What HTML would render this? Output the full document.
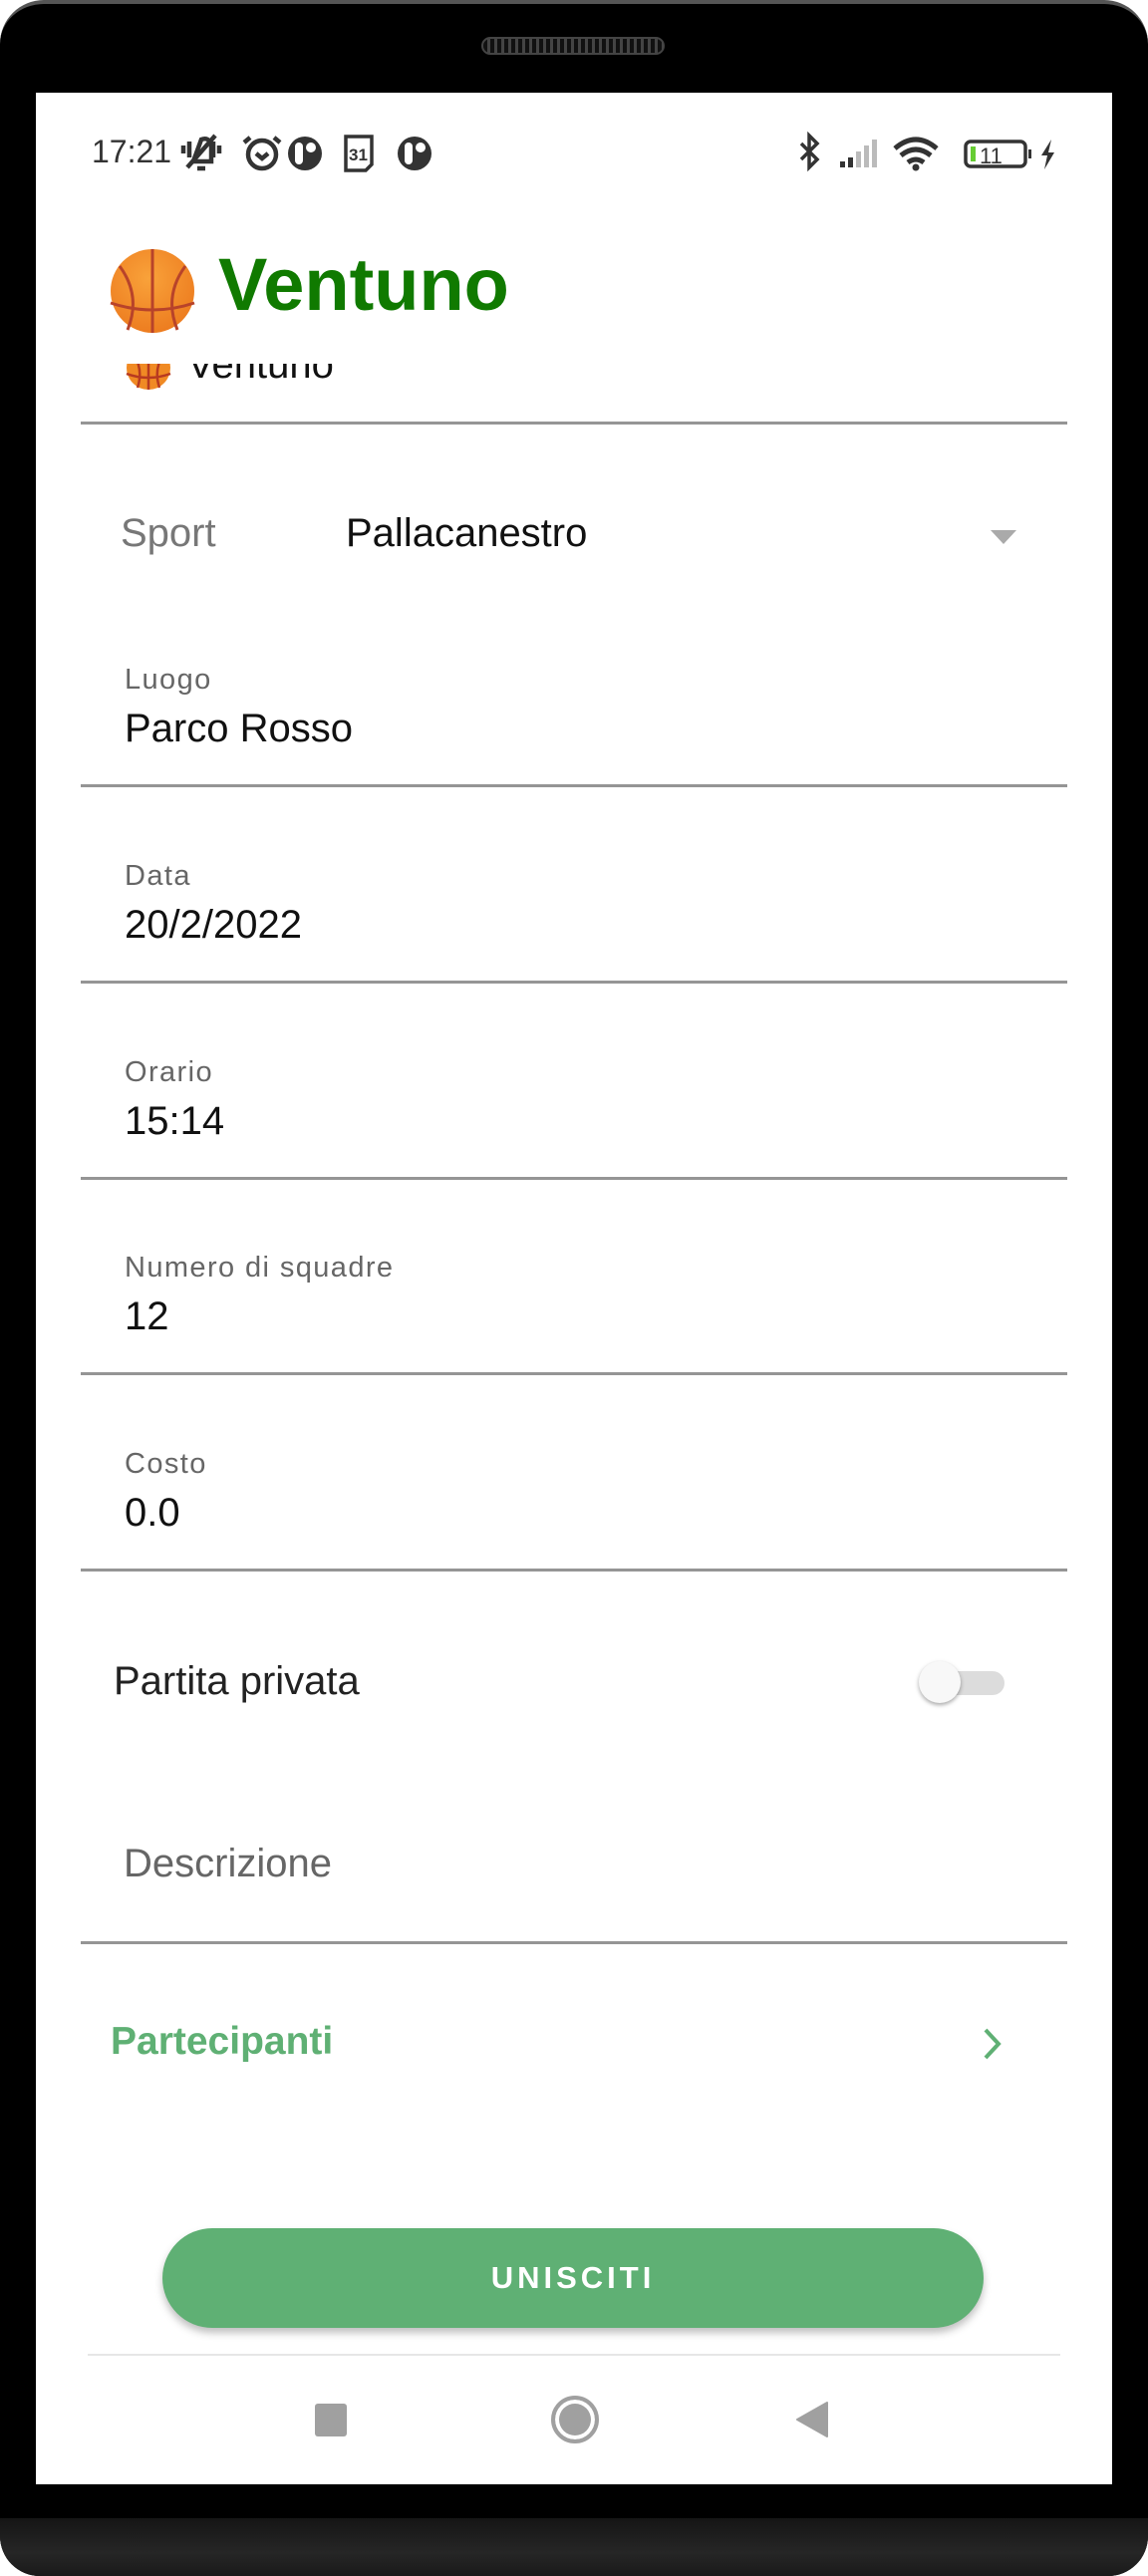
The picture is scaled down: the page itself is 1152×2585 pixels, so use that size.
<!DOCTYPE html>
<html><head><meta charset="utf-8"><style>
*{margin:0;padding:0;box-sizing:border-box}
body{width:1152px;height:2585px;background:#fff;position:relative;overflow:hidden;font-family:"Liberation Sans",sans-serif}
.a{position:absolute}
.frame{left:0;top:0;width:1152px;height:2585px;background:#000;border-radius:44px 44px 40px 40px;border-top:4px solid #555}
.bottom{left:0;top:2527px;width:1152px;height:58px;background:linear-gradient(#151515,#262626 60%,#1a1a1a);border-radius:0 0 40px 40px}
.screen{left:36px;top:93px;width:1080px;height:2400px;background:#fff;overflow:hidden}
.lbl{font-size:29px;color:#666;left:125px;letter-spacing:1.4px}
.val{font-size:40px;color:#111;left:125px}
.line{left:81px;width:990px;height:3px;background:#959595}
</style></head><body>
<div class="a frame"></div>
<div class="a bottom"></div>
<div class="a" style="left:483px;top:37px;width:184px;height:18px;border-radius:9px;background:#222;border:2px solid #444;background-image:repeating-linear-gradient(90deg,#111 0 4px,#444 4px 7px)"></div>
<div class="a screen"></div>

<!-- status bar -->
<div class="a" style="left:92px;top:134px;font-size:32px;color:#333">17:21</div>
<svg class="a" style="left:180px;top:132px" width="260" height="44" viewBox="0 0 260 44">
 <g fill="none" stroke="#333" stroke-width="4.5">
  <path d="M10 10v16M4 14v8M34 10v16M40 14v8"/><path d="M14 30 L22 8 Q30 5 32 14 L32 30Z"/><path d="M8 36 L36 4"/><path d="M18 37h8"/>
  <circle cx="83" cy="23" r="14"/><path d="M71 6l-6 5M95 6l6 5M77 22l6 5 6-5"/>
 </g>
 <circle cx="126" cy="22" r="17" fill="#333"/><rect x="116" y="11" width="8" height="22" rx="4" fill="#fff"/><circle cx="132" cy="16" r="5" fill="#fff"/>
 <path d="M167 5h26v28l-6 6h-20z" fill="none" stroke="#333" stroke-width="3.5"/><text x="170" y="29" font-size="17" font-weight="bold" font-family="Liberation Sans" fill="#333">31</text>
 <circle cx="236" cy="22" r="17" fill="#333"/><rect x="226" y="11" width="8" height="22" rx="4" fill="#fff"/><circle cx="242" cy="16" r="5" fill="#fff"/>
</svg>
<svg class="a" style="left:800px;top:132px" width="270" height="44" viewBox="0 0 270 44">
 <path d="M4 12l16 16-8 8V4l8 8-16 16" fill="none" stroke="#333" stroke-width="3.5"/>
 <rect x="43" y="30" width="5" height="6" fill="#333"/><rect x="51" y="26" width="5" height="10" fill="#333"/><rect x="59" y="20" width="5" height="16" fill="#bbb"/><rect x="67" y="14" width="5" height="22" fill="#bbb"/><rect x="75" y="8" width="5" height="28" fill="#bbb"/>
 <g fill="none" stroke="#333" stroke-width="5"><path d="M98 17q21-18 42 0"/><path d="M104 24q15-12 30 0"/><path d="M111 31q8-6 16 0"/></g><circle cx="119" cy="36" r="3.5" fill="#333"/>
 <rect x="169" y="10" width="60" height="25" rx="5" fill="none" stroke="#333" stroke-width="3.5"/><rect x="174" y="15" width="5" height="15" fill="#6c3"/>
 <text x="183" y="32" font-size="22" font-family="Liberation Sans" fill="#333">11</text><rect x="232" y="18" width="3" height="9" fill="#333"/>
 <path d="M255 8l-10 16h6l-3 14 10-17h-6z" fill="#333"/>
</svg>

<!-- scrolled content -->
<svg class="a" style="left:126px;top:345px" width="46" height="48" viewBox="0 0 46 48"><circle cx="23" cy="24" r="22" fill="#f08a24"/><g fill="none" stroke="#b83a20" stroke-width="2.5"><path d="M23 2v44M1 30q22 8 44 0M8 10q10 16 4 34M38 10q-10 16-4 34"/></g></svg>
<div class="a" style="left:188px;top:344px;font-size:40px;color:#111">Ventuno</div>
<div class="a" style="left:36px;top:205px;width:1080px;height:160px;background:#fff"></div>
<svg class="a" style="left:110px;top:249px" width="86" height="86" viewBox="0 0 86 86"><defs><radialGradient id="g" cx="0.45" cy="0.35" r="0.7"><stop offset="0" stop-color="#f9a23a"/><stop offset="1" stop-color="#ec7a1e"/></radialGradient></defs><circle cx="43" cy="43" r="42" fill="url(#g)"/><g fill="none" stroke="#b8432a" stroke-width="3"><path d="M43 1v84M1 55q42 14 84 0M10 18q22 30 8 64M76 18q-22 30-8 64"/></g></svg>
<div class="a" style="left:219px;top:243px;font-size:74px;font-weight:bold;color:#107a00">Ventuno</div>
<div class="a line" style="top:423px"></div>

<!-- sport -->
<div class="a" style="left:121px;top:513px;font-size:40px;color:#777">Sport</div>
<div class="a" style="left:347px;top:513px;font-size:40px;color:#111">Pallacanestro</div>
<div class="a" style="left:994px;top:532px;width:0;height:0;border-left:13px solid transparent;border-right:13px solid transparent;border-top:14px solid #aaa"></div>

<div class="a lbl" style="top:666px">Luogo</div><div class="a val" style="top:709px">Parco Rosso</div><div class="a line" style="top:787px"></div>
<div class="a lbl" style="top:863px">Data</div><div class="a val" style="top:906px">20/2/2022</div><div class="a line" style="top:984px"></div>
<div class="a lbl" style="top:1060px">Orario</div><div class="a val" style="top:1103px">15:14</div><div class="a line" style="top:1181px"></div>
<div class="a lbl" style="top:1256px">Numero di squadre</div><div class="a val" style="top:1299px">12</div><div class="a line" style="top:1377px"></div>
<div class="a lbl" style="top:1453px">Costo</div><div class="a val" style="top:1496px">0.0</div><div class="a line" style="top:1574px"></div>

<div class="a" style="left:114px;top:1665px;font-size:40px;color:#222">Partita privata</div>
<div class="a" style="left:930px;top:1677px;width:78px;height:24px;border-radius:12px;background:#dcdcdc"></div>
<div class="a" style="left:922px;top:1667px;width:42px;height:42px;border-radius:50%;background:#f8f8f8;box-shadow:0 2px 4px rgba(0,0,0,.35)"></div>

<div class="a" style="left:124px;top:1848px;font-size:40px;color:#666">Descrizione</div>
<div class="a line" style="top:1948px"></div>

<div class="a" style="left:111px;top:2027px;font-size:39px;font-weight:bold;color:#5fb074">Partecipanti</div>
<svg class="a" style="left:985px;top:2034px" width="22" height="34" viewBox="0 0 22 34"><path d="M4 3l13 14-13 14" fill="none" stroke="#5fb074" stroke-width="4"/></svg>

<div class="a" style="left:163px;top:2236px;width:824px;height:100px;border-radius:50px;background:#5fb074;box-shadow:0 5px 8px rgba(0,0,0,.25);color:#fff;font-size:31px;font-weight:bold;letter-spacing:4px;text-align:center;line-height:100px">UNISCITI</div>

<div class="a" style="left:88px;top:2362px;width:976px;height:2px;background:#e6e6e6"></div>
<div class="a" style="left:316px;top:2412px;width:32px;height:33px;border-radius:3px;background:#a0a0a0"></div>
<div class="a" style="left:553px;top:2404px;width:48px;height:48px;border-radius:50%;border:4px solid #a0a0a0;background:#a0a0a0;box-shadow:inset 0 0 0 4px #fff"></div>
<svg class="a" style="left:798px;top:2409px" width="34" height="38" viewBox="0 0 34 38"><path d="M32 2v34L2 19z" fill="#a0a0a0" stroke="#a0a0a0" stroke-width="2" stroke-linejoin="round"/></svg>
</body></html>
